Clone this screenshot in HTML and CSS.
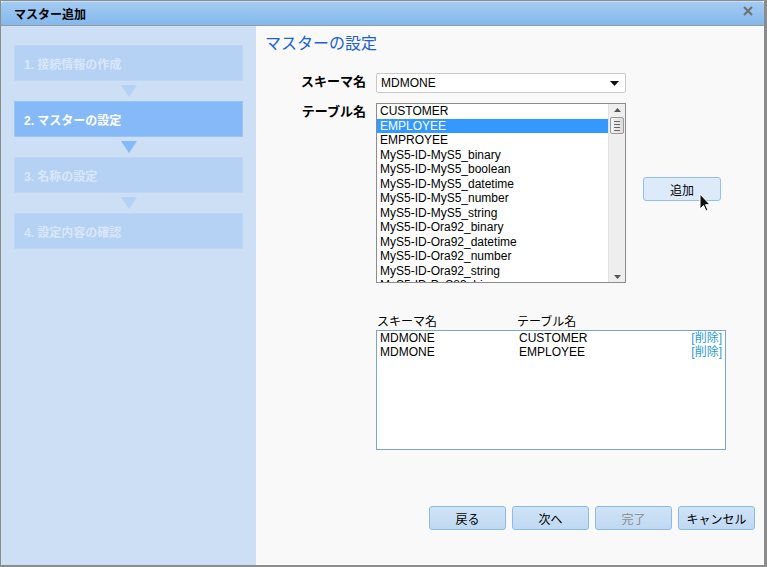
FILE: index.html
```html
<!DOCTYPE html>
<html lang="ja">

<head>
  <title>マスター追加</title>
  <link rel="stylesheet" href="styles.css">
</head>

<body>

  <div class="window">
    <header class="titlebar">
      <h1>マスター追加</h1>
      <button type="button" class="close" aria-label="閉じる">
        <svg width="12" height="12" viewBox="0 0 12 12">
          <path d="M2 2 10 10 M10 2 2 10" stroke="#6f6f6f" stroke-width="2" />
        </svg>
      </button>
    </header>

    <div class="body">
      <nav class="steps">
        <div class="step">1. 接続情報の作成</div>
        <div class="arrow"></div>
        <div class="step is-active">2. マスターの設定</div>
        <div class="arrow is-active"></div>
        <div class="step">3. 名称の設定</div>
        <div class="arrow"></div>
        <div class="step">4. 設定内容の確認</div>
      </nav>

      <main class="content">
        <h2>マスターの設定</h2>

        <div class="form">
          <label class="label">スキーマ名</label>
          <div class="select">
            <span>MDMONE</span>
            <svg width="9" height="5" viewBox="0 0 9 5"><path d="M0 0h9L4.5 5z" fill="#111" /></svg>
          </div>
          <span></span>

          <label class="label">テーブル名</label>
          <div class="listbox">
            <ul class="options">
              <li>CUSTOMER</li>
              <li class="is-selected">EMPLOYEE</li>
              <li>EMPROYEE</li>
              <li>MyS5-ID-MyS5_binary</li>
              <li>MyS5-ID-MyS5_boolean</li>
              <li>MyS5-ID-MyS5_datetime</li>
              <li>MyS5-ID-MyS5_number</li>
              <li>MyS5-ID-MyS5_string</li>
              <li>MyS5-ID-Ora92_binary</li>
              <li>MyS5-ID-Ora92_datetime</li>
              <li>MyS5-ID-Ora92_number</li>
              <li>MyS5-ID-Ora92_string</li>
              <li>MyS5-ID-PgS83_binary</li>
            </ul>
            <div class="scrollbar">
              <svg width="7" height="4" viewBox="0 0 7 4"><path d="M0 4h7L3.5 0z" fill="#555" /></svg>
              <div class="thumb">
                <i></i><i></i><i></i><i></i>
              </div>
              <div class="track"></div>
              <svg width="7" height="4" viewBox="0 0 7 4"><path d="M0 0h7L3.5 4z" fill="#555" /></svg>
            </div>
          </div>
          <div class="add-wrap">
            <button type="button" class="btn add">追加</button>
            <svg class="cursor" width="12" height="19" viewBox="0 0 12 19">
              <path d="M1 1v15l3.5-3.5 2.5 5.5 2-1-2.5-5.3H11z" fill="#111" stroke="#fff" stroke-width="1" />
            </svg>
          </div>
        </div>

        <section class="selected">
          <div class="selected-head">
            <span>スキーマ名</span>
            <span>テーブル名</span>
          </div>
          <div class="selected-box">
            <div class="row">
              <span>MDMONE</span>
              <span>CUSTOMER</span>
              <a href="#">[削除]</a>
            </div>
            <div class="row">
              <span>MDMONE</span>
              <span>EMPLOYEE</span>
              <a href="#">[削除]</a>
            </div>
          </div>
        </section>

        <div class="actions">
          <button type="button" class="btn">戻る</button>
          <button type="button" class="btn">次へ</button>
          <button type="button" class="btn" disabled>完了</button>
          <button type="button" class="btn">キャンセル</button>
        </div>
      </main>
    </div>
  </div>

</body>

</html>
```

FILE: styles.css
```css
* {
  box-sizing: border-box;
}

body {
  margin: 0;
  background-color: #8c8c8c;
  font-family: "Liberation Sans", "Noto Sans CJK JP", sans-serif;
  font-size: 12px;
  color: #000;
}

.window {
  margin: 1px 0 0 1px;
  inline-size: 763px;
  block-size: 564px;
  display: flex;
  flex-flow: column;
  background-color: #f9f9f9;
}

.titlebar {
  display: flex;
  align-items: center;
  justify-content: space-between;
  block-size: 25px;
  padding: 0 10px 1px 13px;
  border-radius: 3px 3px 0 0;
  border-top: 1px solid #c4def8;
  border-bottom: 1px solid #9a9a9a;
  background: linear-gradient(#a3cbf2, #83b8ec);

  h1 {
    margin: 0;
    font-size: 12px;
    font-weight: bold;
  }
}

.close {
  border: 0;
  padding: 0;
  background: none;
  display: flex;
  margin-top: -4px;
}

.body {
  flex: 1;
  display: flex;
}

/* 左側のステップ */
.steps {
  inline-size: 255px;
  background-color: #cddff5;
  padding: 19px 13px 0;
  display: flex;
  flex-flow: column;
}

.step {
  block-size: 36px;
  display: flex;
  align-items: center;
  padding-left: 9px;
  background-color: #b5d2f5;
  border: 1px solid #bdd6f5;
  color: #d9e7f9;
  font-weight: bold;
  font-size: 12px;

  &.is-active {
    background-color: #86b9f8;
    border-color: #9dc4ef;
    color: #fff;
  }
}

.arrow {
  block-size: 20px;
  display: flex;
  justify-content: center;
  align-items: center;

  &::before {
    content: '';
    margin-left: 1px;
    border-top: 12px solid #b5d2f5;
    border-left: 8px solid transparent;
    border-right: 8px solid transparent;
  }

  &.is-active::before {
    border-top-color: #86b9f8;
  }
}

/* 右側のコンテンツ */
.content {
  flex: 1;
  display: flex;
  flex-flow: column;
  padding: 8px 9px 34px;

  h2 {
    margin: 0;
    font-size: 16px;
    line-height: 20px;
    font-weight: normal;
    color: #1b5fda;
  }
}

.form {
  margin: 19px 0 0 25px;
  display: grid;
  grid-template-columns: 76px 250px auto;
  column-gap: 10px;
  row-gap: 10px;
}

.label {
  font-weight: bold;
  font-size: 13px;
  text-align: right;
  line-height: 18px;
}

.select {
  block-size: 20px;
  display: flex;
  align-items: center;
  justify-content: space-between;
  padding: 0 6px 0 4px;
  background-color: #fff;
  border: 1px solid #c9c9c9;
  border-radius: 2px;
}

.listbox {
  block-size: 180px;
  display: flex;
  border: 1px solid #8c8c8c;
  background-color: #fff;
  overflow: hidden;
}

.options {
  list-style-type: '';
  margin: 0;
  padding: 0;
  flex: 1;

  li {
    padding-left: 3px;
    line-height: 14.5px;
    white-space: nowrap;

    &.is-selected {
      background-color: #3399ff;
      color: #fff;
    }
  }
}

.scrollbar {
  inline-size: 17px;
  background-color: #eeeeee;
  border-left: 1px solid #e2e2e2;
  display: flex;
  flex-flow: column;
  align-items: center;
  padding: 4px 0 3px;

  svg {
    flex: none;
  }
}

.thumb {
  margin-top: 5px;
  inline-size: 14px;
  block-size: 17px;
  border: 1px solid #9a9a9a;
  border-radius: 2px;
  background: linear-gradient(90deg, #f4f4f4, #dcdcdc);
  display: flex;
  flex-flow: column;
  justify-content: center;
  gap: 2px;
  padding: 0 3px;

  i {
    display: block;
    block-size: 1px;
    background-color: #666;
  }
}

.track {
  flex: 1;
}

.add-wrap {
  position: relative;
  align-self: center;
  margin: -8px 0 0 7px;
}

.cursor {
  position: absolute;
  left: 56px;
  top: 16px;
}

.btn {
  inline-size: 77px;
  block-size: 24px;
  padding: 0;
  border: 1px solid #8cbbe8;
  border-radius: 3px;
  background: linear-gradient(#cfe3f7, #c0d9f2);
  font-family: inherit;
  font-size: 12px;
  color: #000;

  &:disabled {
    color: #8a8a8a;
  }
}

.add {
  inline-size: 78px;
  border-color: #91bfeb;
  background: #dceaf9;
}

.selected {
  margin: 32px 0 0 111px;
  inline-size: 350px;
}

.selected-head {
  display: grid;
  grid-template-columns: 140px 1fr;
  line-height: 15px;
  padding-left: 1px;
}

.selected-box {
  block-size: 120px;
  border: 1px solid #7ea3c4;
  background-color: #fff;
  padding: 0 3px;
}

.row {
  display: grid;
  grid-template-columns: 139px 1fr auto;
  line-height: 14px;

  a {
    color: #2a9bd9;
    text-decoration: none;
  }
}

.actions {
  margin-top: auto;
  margin-bottom: 1px;
  display: flex;
  justify-content: flex-end;
  gap: 6px;
}
```
